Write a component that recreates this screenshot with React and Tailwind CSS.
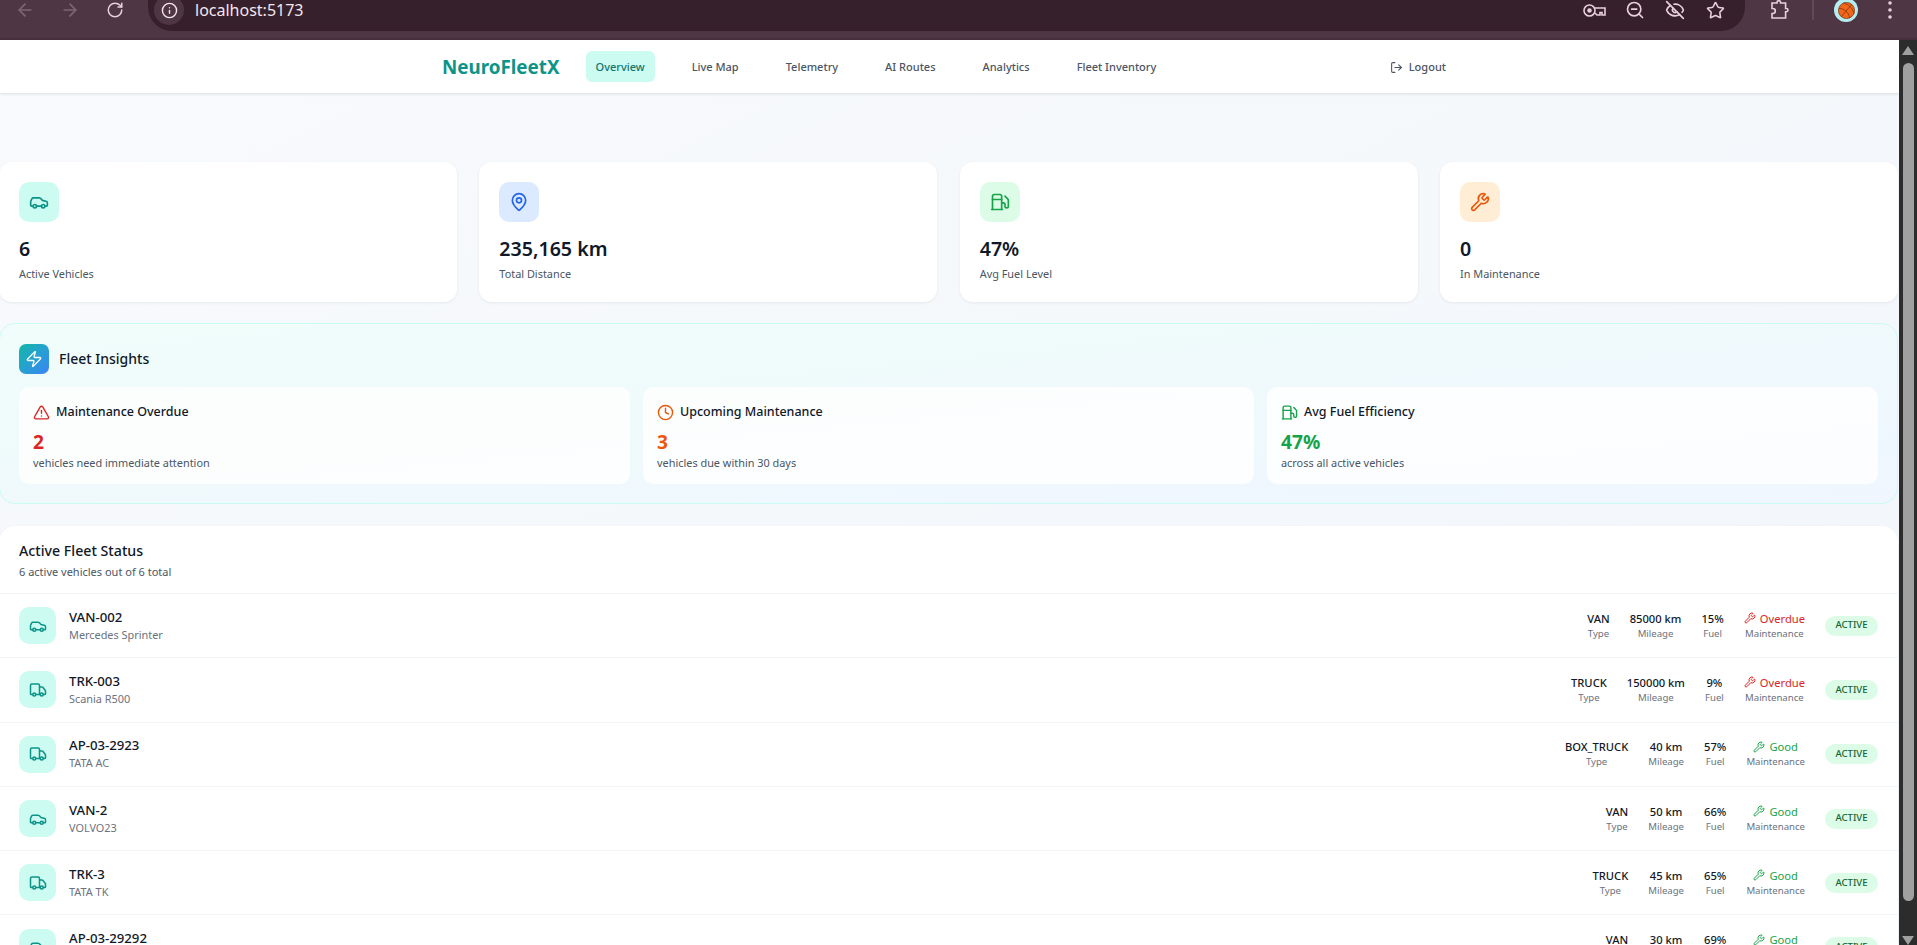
import { ArrowLeft, ArrowRight, RotateCw, Info, ZoomOut, EyeOff, Star, Car, MapPin, Fuel, Wrench, Zap, TriangleAlert, Clock, Truck, LogOut } from 'lucide-react';

const font = { fontFamily: '"Noto Sans", sans-serif' };

const navItems = ['Live Map', 'Telemetry', 'AI Routes', 'Analytics', 'Fleet Inventory'];

const stats = [
    { icon: Car, box: 'bg-[#ccfbf1] text-[#0d9488]', value: '6', label: 'Active Vehicles' },
    { icon: MapPin, box: 'bg-[#dbeafe] text-[#2563eb]', value: '235,165 km', label: 'Total Distance' },
    { icon: Fuel, box: 'bg-[#dcfce7] text-[#16a34a]', value: '47%', label: 'Avg Fuel Level' },
    { icon: Wrench, box: 'bg-[#ffedd5] text-[#ea580c]', value: '0', label: 'In Maintenance' },
];

const insights = [
    { icon: TriangleAlert, color: 'text-[#dc2626]', title: 'Maintenance Overdue', value: '2', note: 'vehicles need immediate attention' },
    { icon: Clock, color: 'text-[#ea580c]', title: 'Upcoming Maintenance', value: '3', note: 'vehicles due within 30 days' },
    { icon: Fuel, color: 'text-[#16a34a]', title: 'Avg Fuel Efficiency', value: '47%', note: 'across all active vehicles' },
];

const vehicles = [
    { id: 'VAN-002', model: 'Mercedes Sprinter', type: 'VAN', mileage: '85000 km', fuel: '15%', overdue: true, icon: Car },
    { id: 'TRK-003', model: 'Scania R500', type: 'TRUCK', mileage: '150000 km', fuel: '9%', overdue: true, icon: Truck },
    { id: 'AP-03-2923', model: 'TATA AC', type: 'BOX_TRUCK', mileage: '40 km', fuel: '57%', overdue: false, icon: Truck },
    { id: 'VAN-2', model: 'VOLVO23', type: 'VAN', mileage: '50 km', fuel: '66%', overdue: false, icon: Car },
    { id: 'TRK-3', model: 'TATA TK', type: 'TRUCK', mileage: '45 km', fuel: '65%', overdue: false, icon: Truck },
    { id: 'AP-03-29292', model: '', type: 'VAN', mileage: '30 km', fuel: '69%', overdue: false, icon: Car },
];

function ChromeBar() {
    return (
        <div className="flex h-[40px] shrink-0 items-start overflow-hidden border-b-2 border-[#46303c] bg-[#4f3644] text-[#e8d0dc]">
            <div className="flex h-[20px] items-center gap-[25px] pl-[15px]">
                <ArrowLeft size={20} className="text-[#7d6772]" />
                <ArrowRight size={20} className="text-[#7d6772]" />
                <RotateCw size={18} className="ml-px" />
            </div>
            <div className="ml-[24px] flex h-[31px] w-[1597px] items-start rounded-b-[24px] bg-[#36202c] pl-[6px]">
                <div className="-mt-[5px] flex h-[30px] w-[30px] items-center justify-center rounded-full bg-[#4f3644]">
                    <Info size={17} className="text-[#f3e6ec]" />
                </div>
                <span className="ml-[11px] text-[16px] leading-[20px] text-[#f3e6ec]">localhost:5173</span>
                <div className="ml-auto mr-[20px] flex h-[20px] items-center">
                    <svg width="23" height="13" viewBox="0 0 23 13" fill="none" stroke="currentColor" strokeWidth="1.6">
                        <circle cx="6.5" cy="6.5" r="5.5" />
                        <circle cx="6.5" cy="6.5" r="1.5" fill="currentColor" />
                        <path d="M12 4h10v7h-3V8.5h-2V11h-3l-2-2" />
                    </svg>
                    <ZoomOut size={20} className="ml-[19px]" />
                    <EyeOff size={20} className="ml-[20px]" />
                    <Star size={19} className="ml-[21px]" />
                </div>
            </div>
            <div className="flex h-[20px] items-center">
                <svg width="20" height="20" viewBox="0 0 20 20" fill="none" stroke="currentColor" strokeWidth="1.6" className="ml-[24px]">
                    <path d="M3 3h5v-.5a1.8 1.8 0 0 1 3.6 0V3h5v5.5h.8a1.6 1.6 0 0 1 0 3.2h-.8V18H3v-4.5h.8a2.5 2.5 0 0 0 0-5H3z" />
                </svg>
                <div className="ml-[23px] h-[20px] w-[2px] bg-[#634856]" />
                <div className="ml-[20px] flex h-[24px] w-[24px] items-center justify-center rounded-full bg-[#b5eef2]">
                    <svg width="17" height="17" viewBox="0 0 16 16" fill="none" stroke="#7a3410" strokeWidth="0.7">
                        <circle cx="8" cy="8" r="7.6" fill="#f2661a" />
                        <path d="M1 6c4 0 9 3 10 9M5 1c5 1 9 5 10 10M13 2 3 14" />
                    </svg>
                </div>
                <svg width="4" height="18" viewBox="0 0 4 18" fill="currentColor" className="ml-[30px]">
                    <circle cx="2" cy="2" r="1.8" />
                    <circle cx="2" cy="9" r="1.8" />
                    <circle cx="2" cy="16" r="1.8" />
                </svg>
            </div>
        </div>
    );
}

function Nav() {
    return (
        <nav className="flex h-[53px] shrink-0 items-center bg-white pl-[442px] shadow-[0_1px_3px_rgba(15,23,42,0.12)]">
            <div className="flex w-[1004px] items-center gap-[27px]">
                <span className="text-[18.8px] font-bold leading-[26px] text-[#0d9488]">NeuroFleetX</span>
                <span className="-ml-px flex h-[31px] items-center rounded-[6px] bg-[#ccfbf1] px-[10px] pt-px text-[11px] font-medium text-[#0f766e]">Overview</span>
                {navItems.map((item) => (
                    <span key={item} className="px-[10px] pt-px text-[11px] font-medium text-[#4b5563]">{item}</span>
                ))}
                <span className="ml-auto flex items-center gap-[6px] pt-px text-[11px] font-medium text-[#4b5563]">
                    <LogOut size={13} />
                    Logout
                </span>
            </div>
        </nav>
    );
}

function StatCard({ stat }) {
    const Icon = stat.icon;
    return (
        <div className="rounded-[13px] bg-white p-5 shadow-[0_1px_3px_rgba(15,23,42,0.07)]">
            <div className={`flex h-10 w-10 items-center justify-center rounded-[10px] ${stat.box}`}>
                <Icon size={20} />
            </div>
            <div className="mt-[13px] text-[19.6px] font-semibold leading-[28px] text-[#111827]">{stat.value}</div>
            <div className="mt-[3px] text-[10.9px] leading-[16px] text-[#4b5563]">{stat.label}</div>
        </div>
    );
}

function InsightCard({ item }) {
    const Icon = item.icon;
    return (
        <div className="h-[97px] rounded-[10px] bg-white/80 px-[14px] pt-[15px]">
            <div className="flex h-[20px] items-center gap-[6px]">
                <Icon size={17} className={item.color} />
                <span className="text-[12.5px] font-medium text-[#111827]">{item.title}</span>
            </div>
            <div className={`mt-[7px] text-[19.2px] font-bold leading-[26px] ${item.color}`}>{item.value}</div>
            <div className="text-[10.9px] leading-[16px] text-[#4b5563]">{item.note}</div>
        </div>
    );
}

function Metric({ value, label }) {
    return (
        <div className="text-center">
            <div className="text-[11.2px] font-medium leading-[15px] text-[#111827]">{value}</div>
            <div className="text-[9.6px] leading-[15px] text-[#6b7280]">{label}</div>
        </div>
    );
}

function VehicleRow({ vehicle }) {
    const Icon = vehicle.icon;
    const color = vehicle.overdue ? 'text-[#dc2626]' : 'text-[#16a34a]';
    return (
        <div className="flex h-[64.3px] items-center justify-between border-b border-[#f3f4f6] pl-[20px] pr-[20px]">
            <div className="flex items-center gap-[13px]">
                <div className="flex h-[37px] w-[37px] items-center justify-center rounded-[10px] bg-[#ccfbf1] text-[#0d9488]">
                    <Icon size={18} />
                </div>
                <div>
                    <div className="text-[13.2px] font-medium leading-[18px] text-[#111827]">{vehicle.id}</div>
                    <div className="h-[18px] text-[10.9px] leading-[18px] text-[#6b7280]">{vehicle.model}</div>
                </div>
            </div>
            <div className="flex items-center gap-5">
                <Metric value={vehicle.type} label="Type" />
                <Metric value={vehicle.mileage} label="Mileage" />
                <Metric value={vehicle.fuel} label="Fuel" />
                <div className="text-center">
                    <div className={`flex items-center justify-center gap-[4px] text-[11.2px] leading-[15px] ${color}`}>
                        <Wrench size={12} />
                        {vehicle.overdue ? 'Overdue' : 'Good'}
                    </div>
                    <div className="text-[9.6px] leading-[15px] text-[#6b7280]">Maintenance</div>
                </div>
                <span className="flex h-[20px] w-[53px] items-center justify-center rounded-full bg-[#dcfce7] text-[9.6px] font-medium text-[#166534]">ACTIVE</span>
            </div>
        </div>
    );
}

function Scrollbar() {
    return (
        <div className="flex w-[18px] shrink-0 flex-col items-center bg-[#2c2c2c] pt-[6px]">
            <div className="h-0 w-0 border-x-[6px] border-b-[9px] border-x-transparent border-b-[#9f9f9f]" />
            <div className="mt-[8px] h-[840px] w-[11px] rounded-full bg-[#a0a0a0]" />
            <div className="mt-[35px] h-0 w-0 border-x-[6px] border-t-[9px] border-x-transparent border-t-[#9f9f9f]" />
        </div>
    );
}

export default function App() {
    return (
        <div className="flex h-[945px] flex-col overflow-hidden" style={font}>
            <ChromeBar />
            <div className="flex min-h-0 flex-1">
                <div className="flex min-w-0 flex-1 flex-col overflow-hidden bg-gradient-to-br from-[#f8fafc] to-[#f1f6fb]">
                    <Nav />
                    <main className="-ml-px pb-8 pr-px pt-[69px]">
                        <div className="grid grid-cols-4 gap-[22.4px]">
                            {stats.map((stat) => <StatCard key={stat.label} stat={stat} />)}
                        </div>
                        <section className="mt-[21px] h-[181px] rounded-[16px] border border-[#ccfbf1] bg-gradient-to-br from-[#f0fdfa] to-[#eff6ff] px-[19px] pt-[20px]">
                            <div className="flex items-center gap-[10px]">
                                <div className="flex h-[30px] w-[30px] items-center justify-center rounded-[7px] bg-gradient-to-br from-[#14b8a6] to-[#3b82f6] text-white">
                                    <Zap size={18} strokeWidth={1.75} />
                                </div>
                                <h2 className="-mt-px text-[14px] font-medium text-[#111827]">Fleet Insights</h2>
                            </div>
                            <div className="mt-[13px] grid grid-cols-3 gap-[13px]">
                                {insights.map((item) => <InsightCard key={item.title} item={item} />)}
                            </div>
                        </section>
                        <section className="mt-[22px] rounded-t-[16px] bg-white shadow-[0_1px_3px_rgba(15,23,42,0.07)]">
                            <div className="border-b border-[#f3f4f6] pb-[13px] pl-[20px] pt-[14px]">
                                <h2 className="text-[14.2px] font-medium leading-[22px] text-[#111827]">Active Fleet Status</h2>
                                <p className="mt-[2px] text-[11px] leading-[16px] text-[#4b5563]">6 active vehicles out of 6 total</p>
                            </div>
                            {vehicles.map((vehicle) => <VehicleRow key={vehicle.id} vehicle={vehicle} />)}
                        </section>
                    </main>
                </div>
                <Scrollbar />
            </div>
        </div>
    );
}
